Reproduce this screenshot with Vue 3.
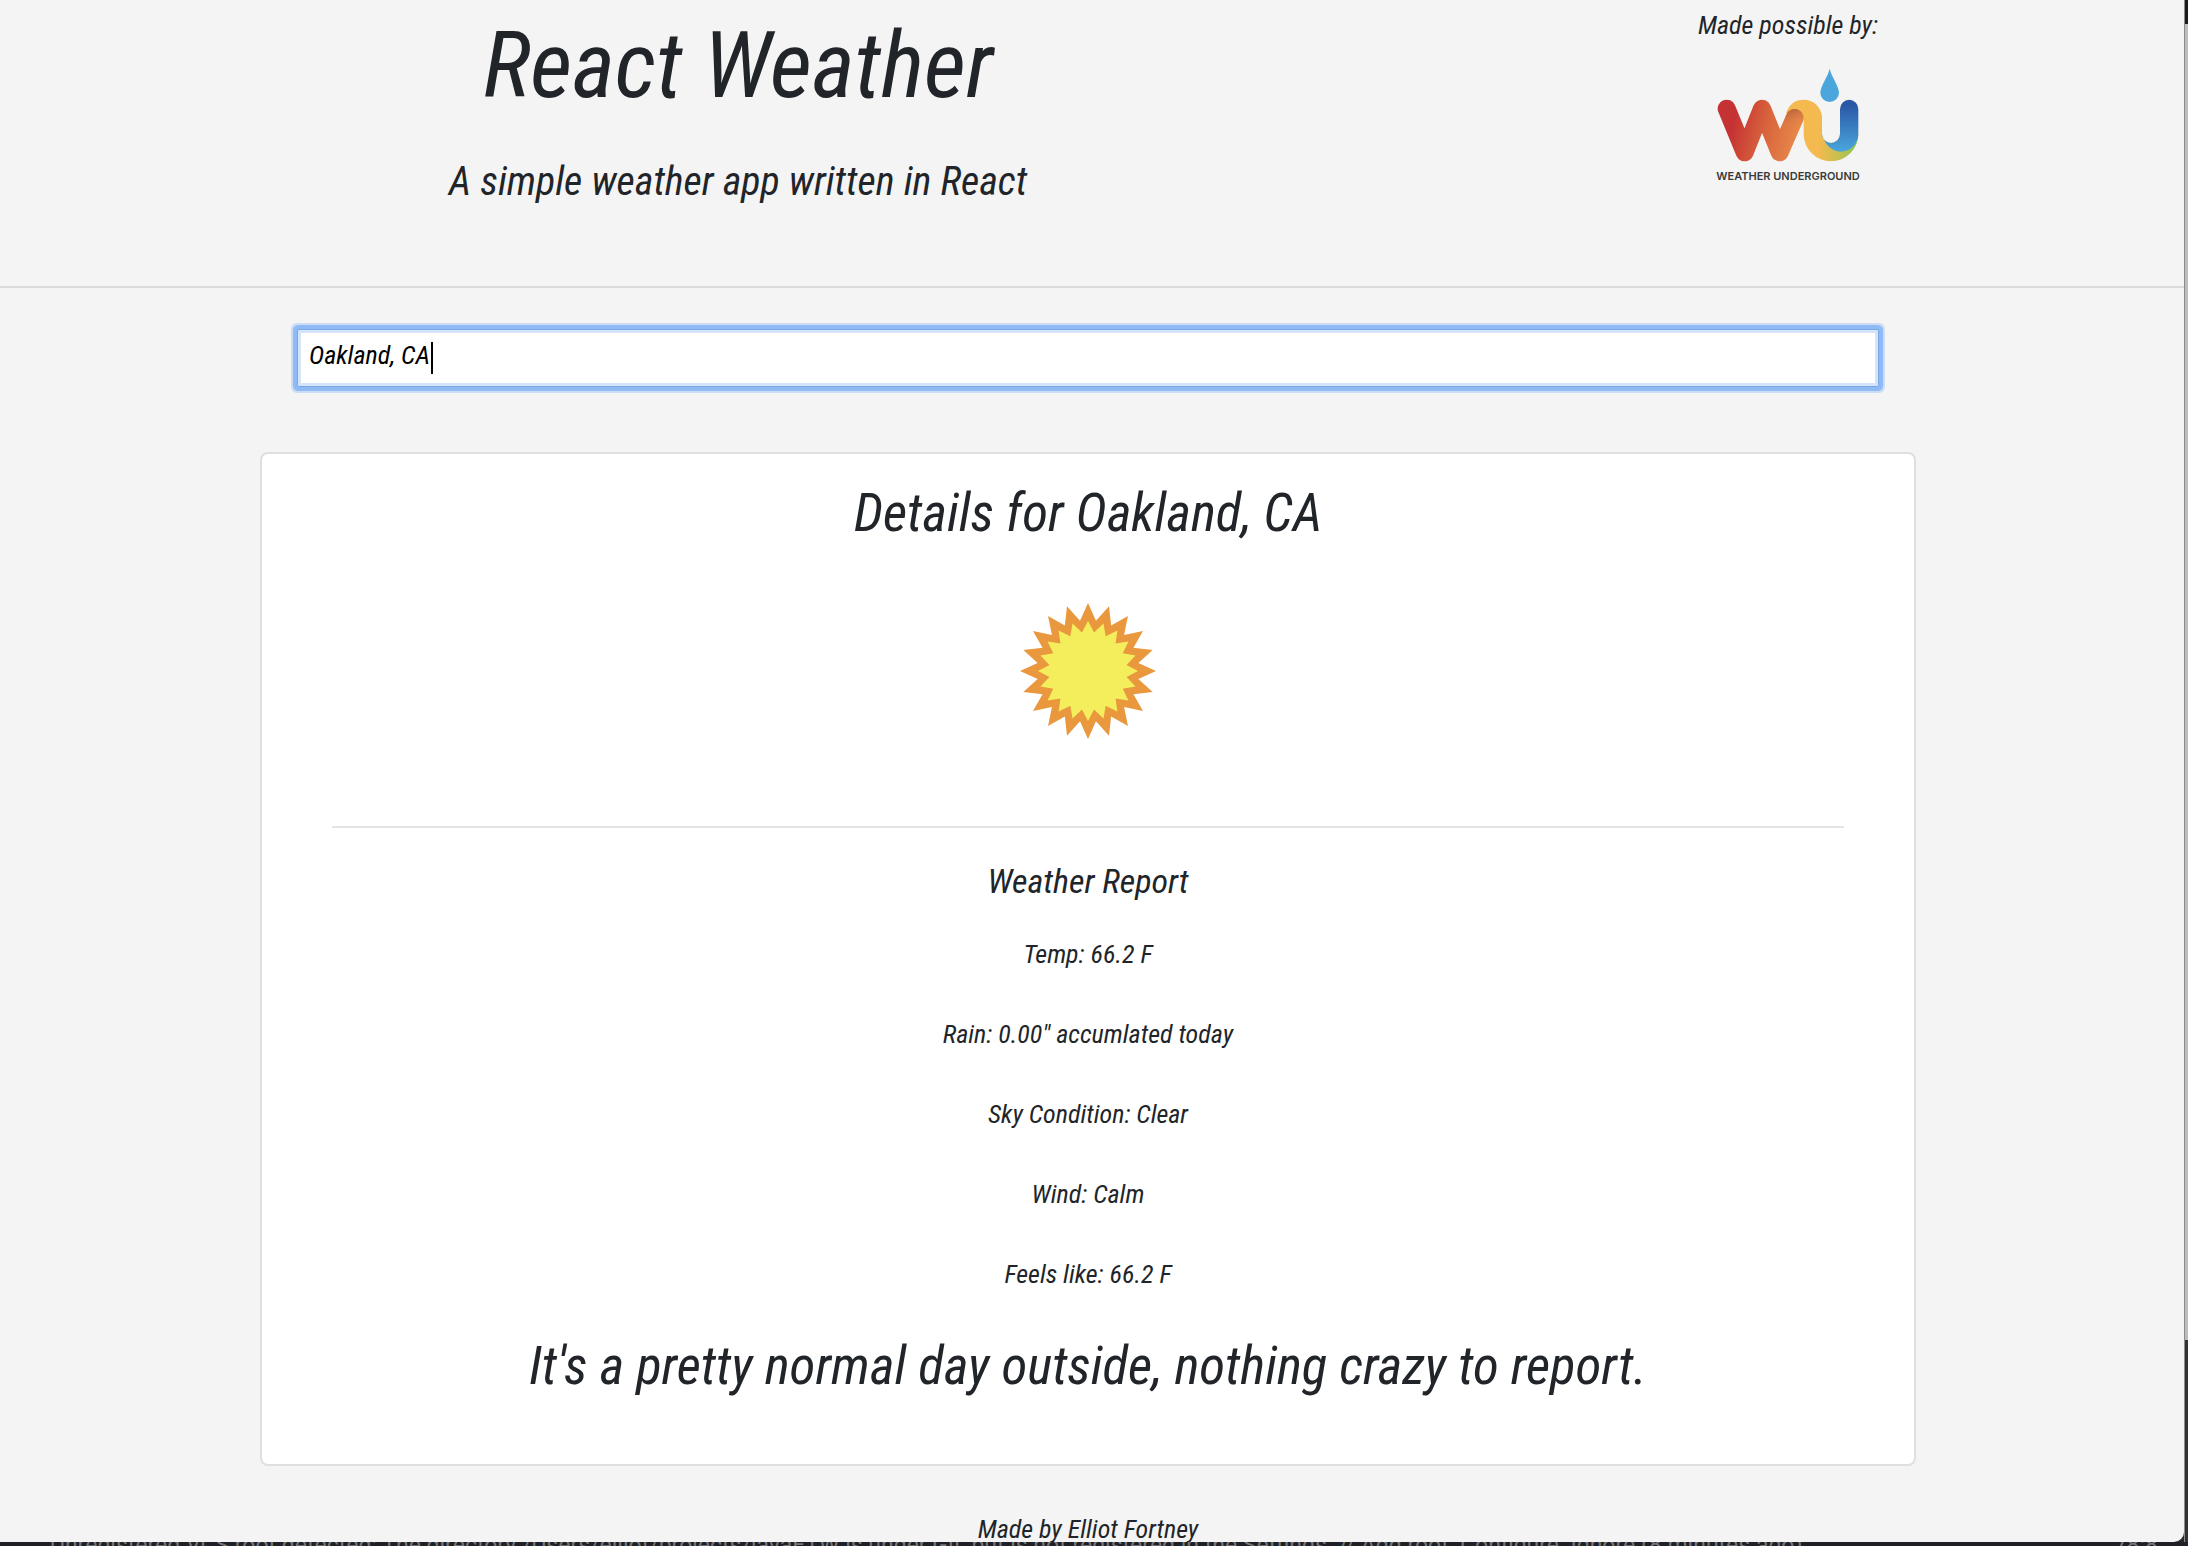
<script setup>
import { ref } from 'vue'

const city = ref('Oakland, CA')
const place = 'Oakland, CA'
const report = [
  'Temp: 66.2 F',
  'Rain: 0.00" accumlated today',
  'Sky Condition: Clear',
  'Wind: Calm',
  'Feels like: 66.2 F',
]

// Twenty-pointed star centred on 0,0
function star(outer, inner) {
  const points = []
  for (let i = 0; i < 40; i++) {
    const r = i % 2 ? inner : outer
    const a = (i * Math.PI) / 20
    points.push(`${(r * Math.sin(a)).toFixed(2)},${(-r * Math.cos(a)).toFixed(2)}`)
  }
  return points.join(' ')
}
</script>

<template>
  <div class="desktop">
    <div class="page">
      <header class="header">
        <div class="brand">
          <h1>React Weather</h1>
          <p class="tagline">A simple weather app written in React</p>
        </div>
        <div class="credit">
          <p>Made possible by:</p>
          <svg class="logo" viewBox="50 20 432 345" role="img" aria-label="Weather Underground">
            <defs>
              <linearGradient id="w" gradientUnits="userSpaceOnUse" x1="90" y1="190" x2="300" y2="240">
                <stop offset="0.05" stop-color="#c53233" />
                <stop offset="0.5" stop-color="#d8633c" />
                <stop offset="1" stop-color="#e88b4b" />
              </linearGradient>
              <linearGradient id="shade" x1="0" y1="0" x2="0.3" y2="1">
                <stop offset="0.1" stop-color="#b5653a" />
                <stop offset="1" stop-color="#e48346" stop-opacity="0" />
              </linearGradient>
              <linearGradient id="u" gradientUnits="userSpaceOnUse" x1="345" y1="0" x2="470" y2="0">
                <stop offset="0.1" stop-color="#f4b94f" />
                <stop offset="0.6" stop-color="#c4c04f" />
                <stop offset="1" stop-color="#8cc556" />
              </linearGradient>
              <linearGradient id="b" x1="0" y1="0" x2="0" y2="1">
                <stop offset="0.1" stop-color="#2a58a6" />
                <stop offset="1" stop-color="#4ba6dc" />
              </linearGradient>
            </defs>
            <path d="M260 158C270 131 288 118 313 118C344 118 368 142 368 172V221A27 27 0 0 0 422 221H477A82 82 0 0 1 313 221V172Z" fill="url(#u)" />
            <path d="M82 145L136 276L188 145L241 276L286 173" fill="none" stroke="url(#w)" stroke-width="54" stroke-linecap="round" stroke-linejoin="round" />
            <path d="M261 163A27 27 0 0 1 311 184L302 206L252 186Z" fill="url(#shade)" />
            <path d="M422 146A27 27 0 0 1 477 146V221A53 53 0 0 1 424 274Q382 272 368 221A27 27 0 0 0 422 221Z" fill="url(#b)" />
            <path d="M391 25C397 50 419 78 419 97A28 28 0 0 1 363 97C363 78 385 50 391 25Z" fill="#4ba6dc" />
            <text x="266" y="358" text-anchor="middle">WEATHER UNDERGROUND</text>
          </svg>
        </div>
      </header>

      <main class="content">
        <form class="search" @submit.prevent>
          <input v-model="city" type="text" aria-label="City" />
          <span class="caret"></span>
        </form>

        <section class="card">
          <h2>Details for {{ place }}</h2>
          <svg class="sun" viewBox="-68 -68 136 136" aria-hidden="true">
            <polygon :points="star(68, 51)" fill="#e9983d" />
            <polygon :points="star(50, 39)" fill="#f5ee5c" />
          </svg>
          <hr />
          <h3>Weather Report</h3>
          <p v-for="line in report" :key="line" class="line">{{ line }}</p>
          <p class="summary">It's a pretty normal day outside, nothing crazy to report.</p>
        </section>
      </main>

      <footer class="footer">Made by Elliot Fortney</footer>
    </div>

    <div class="side"><i class="dark"></i><i class="light"></i><i class="editor"></i></div>
    <div class="status">
      <span>Unregistered VCS root detected: The directory /Users/elliot/projects/javaFTW is under Git, but is not registered in the Settings. // Add root&nbsp; Configure&nbsp; Ignore (8 minutes ago)</span>
      <span>78:8</span>
    </div>
  </div>
</template>

<style>
body {
  margin: 0;
}
</style>

<style scoped>
.desktop {
  display: grid;
  grid-template: minmax(0, 1fr) 4px / minmax(0, 1fr) 4px;
  height: 100vh;
  overflow: hidden;
  background: #25272b;
}
.page {
  overflow: hidden;
  background: #f4f4f4;
  border-bottom-right-radius: 10px;
  color: #212529;
  font: italic 26px/40px "Roboto Condensed", Roboto, sans-serif;
  text-align: center;
}
h1,
h2,
h3,
p {
  margin: 0;
  font-weight: 400;
}
.header {
  display: grid;
  grid-template-columns: 2fr 1fr;
  align-items: start;
  box-sizing: border-box;
  min-height: 288px;
  padding: 0 46px 0 38px;
  border-bottom: 2px solid #dadada;
}
.brand {
  padding-top: 10px;
}
h1 {
  font-size: 92px;
  line-height: 112px;
}
.tagline {
  margin-top: 34px;
  font-size: 40px;
  line-height: 52px;
}
.credit {
  padding-top: 5px;
}
.logo {
  display: block;
  width: 144px;
  height: 115px;
  margin: 22px auto 0;
}
.logo text {
  font: 600 33px Inter, sans-serif;
  fill: #3a3a3a;
}
.content {
  max-width: 1656px;
  margin: 0 auto;
  padding: 41px 8px 0 0;
}
.search {
  position: relative;
  margin: 0 37px 65px;
}
input {
  display: block;
  box-sizing: border-box;
  width: 100%;
  height: 58px;
  padding: 0 11px 6px;
  border: 1px solid #7ba8e2;
  border-radius: 2px;
  outline: none;
  background: #fff;
  box-shadow: inset 0 0 0 3px #d4e5fb, 0 0 0 4px #8ebbf6, 0 0 0 6px #cbdcf4;
  color: #000;
  font: inherit;
}
.caret {
  position: absolute;
  top: 13px;
  left: 134px;
  width: 2px;
  height: 32px;
  background: #000;
}
.card {
  padding: 23px 70px 62px;
  border: 2px solid #dfdfdf;
  border-radius: 8px;
  background: #fff;
}
h2,
.summary {
  font-size: 53px;
  line-height: 72px;
}
.sun {
  display: block;
  width: 136px;
  height: 136px;
  margin: 54px auto 87px;
}
hr {
  height: 2px;
  margin: 0 0 30px;
  border: 0;
  background: #e3e3e3;
}
h3 {
  margin-bottom: 30px;
  font-size: 34px;
  line-height: 46px;
}
.line {
  margin-bottom: 40px;
}
.summary {
  margin-top: -4px;
}
.footer {
  padding: 43px 8px 0 0;
}
.side {
  display: flex;
  flex-direction: column;
  border-left: 1px solid #8c8c8c;
}
.dark {
  height: 24px;
  background: #1c1b19;
}
.light {
  flex: 1;
  background: #bdbdbd;
}
.editor {
  height: 202px;
  background: #303336;
}
.status {
  grid-column: 1 / -1;
  display: flex;
  justify-content: space-between;
  height: 4px;
  padding: 0 30px 0 50px;
  overflow: hidden;
  background: #1f2126;
  color: #77777a;
  font: 23px/24px Roboto, sans-serif;
  white-space: nowrap;
}
.status span {
  margin-top: -8px;
}
</style>
